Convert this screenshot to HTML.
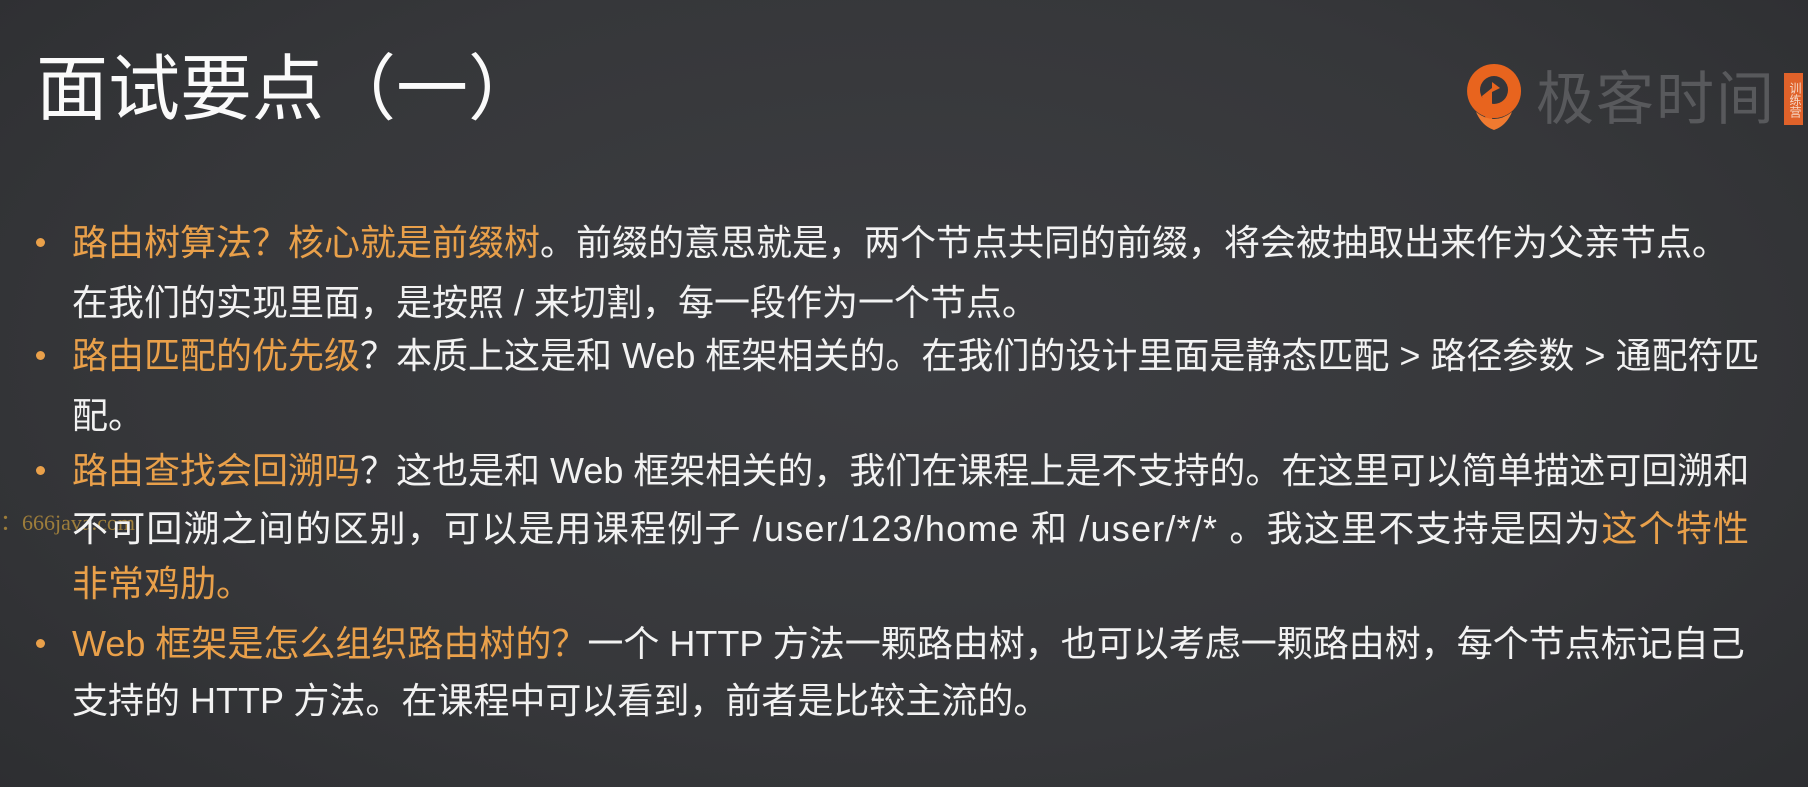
<!DOCTYPE html>
<html><head><meta charset="utf-8"><style>
html,body{margin:0;padding:0}
body{width:1808px;height:787px;overflow:hidden;position:relative;
background:radial-gradient(ellipse 75% 90% at 50% 45%,#3d3e42 0%,#36373a 55%,#2b2c2f 100%);
font-family:"Liberation Sans","Noto Sans CJK SC",sans-serif;color:#f2f2f2}
.t{position:absolute;left:36px;top:42px;font-size:72px;line-height:96px;color:#fafafa;white-space:nowrap}
.l{position:absolute;left:72px;font-size:36px;line-height:44px;white-space:nowrap}
.o{color:#e9a04a}
.d{position:absolute;left:36px;width:9px;height:9px;border-radius:50%;background:#e9a04a}
.wm{position:absolute;left:0;top:505px;font-family:"Liberation Serif",serif;font-size:22px;color:#b8903c;opacity:.8}
</style></head><body>
<div class="t">面试要点（一）</div>

<svg style="position:absolute;left:1462px;top:60px" width="64" height="72" viewBox="0 0 64 72">
<path d="M32 4a27 27 0 1 0 0.1 0z" fill="#e8641e"/>
<circle cx="32" cy="30" r="14" fill="#35363a"/>
<path d="M20 36l10-8v34h-6z" fill="#e8641e"/>
<path d="M30 22l8 6-8 4z" fill="#e8641e"/>
<path d="M14 52q18 14 36 0q-6 14-18 18q-12-4-18-18z" fill="#f07a30"/>
</svg>
<div style="position:absolute;left:1536px;top:66px;font-size:58px;line-height:68px;color:#58595c;letter-spacing:2px">极客时间</div>
<div style="position:absolute;left:1784px;top:73px;width:19px;height:52px;background:#e0622a;color:#f6d9c8;font-size:12px;line-height:16px;text-align:center;writing-mode:vertical-rl;padding-top:2px;box-sizing:border-box">训练营</div>

<div class="d" style="top:238px"></div>
<div class="l" style="top:221px"><span class="o">路由树算法？核心就是前缀树</span>。前缀的意思就是，两个节点共同的前缀，将会被抽取出来作为父亲节点。</div>
<div class="l" style="top:281px">在我们的实现里面，是按照 / 来切割，每一段作为一个节点。</div>
<div class="d" style="top:351px"></div>
<div class="l" style="top:334px"><span class="o">路由匹配的优先级</span>？本质上这是和 Web 框架相关的。在我们的设计里面是静态匹配 &gt; 路径参数 &gt; 通配符匹</div>
<div class="l" style="top:394px">配。</div>
<div class="d" style="top:466px"></div>
<div class="l" style="top:449px"><span class="o">路由查找会回溯吗</span>？这也是和 Web 框架相关的，我们在课程上是不支持的。在这里可以简单描述可回溯和</div>
<div class="wm">：666java.com</div>
<div class="l" style="top:507px;letter-spacing:1.2px"><span>不可回溯之间的区别，可以是用课程例子 /user/123/home 和 /user/*/* 。我这里不支持是因为</span><span class="o">这个特性</span></div>
<div class="l o" style="top:562px">非常鸡肋。</div>
<div class="d" style="top:639px"></div>
<div class="l" style="top:622px"><span class="o">Web 框架是怎么组织路由树的？</span>一个 HTTP 方法一颗路由树，也可以考虑一颗路由树，每个节点标记自己</div>
<div class="l" style="top:679px">支持的 HTTP 方法。在课程中可以看到，前者是比较主流的。</div>
</body></html>
